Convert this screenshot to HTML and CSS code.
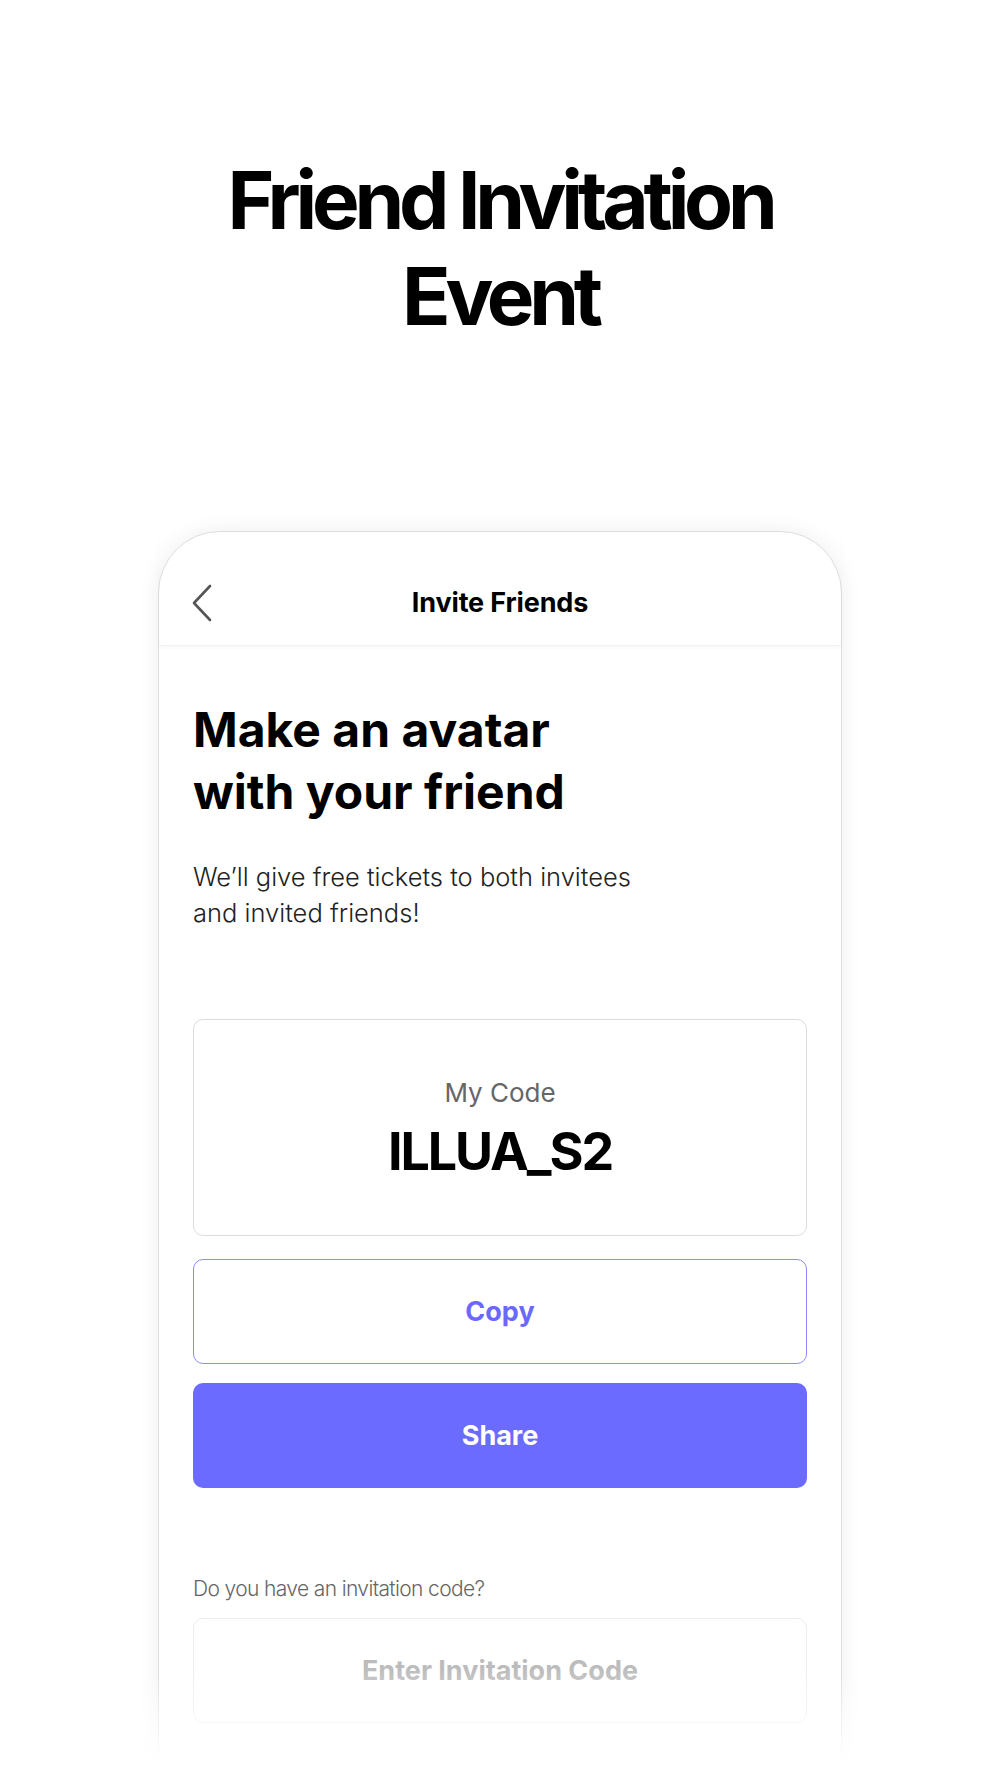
FILE: index.html
```html
<!DOCTYPE html>
<html lang="en">
<head>
    <meta charset="UTF-8">
    <meta name="viewport" content="width=device-width, initial-scale=1">
    <title>Friend Invitation Event</title>
    <link rel="stylesheet" href="styles.css">
</head>
<body>
    <div class="page">
        <h1 class="event-title">Friend Invitation<br>Event</h1>

        <div class="phone">
            <div class="app-header">
                <button class="back-btn" aria-label="Back">
                    <svg width="22" height="38" viewBox="0 0 22 38" fill="none">
                        <polyline points="19,2 3,19 19,36" stroke="#555" stroke-width="2.6" stroke-linecap="round" stroke-linejoin="round"/>
                    </svg>
                </button>
                <span class="header-title">Invite Friends</span>
            </div>

            <div class="content">
                <h2 class="headline">Make an avatar<br>with your friend</h2>
                <p class="desc">We’ll give free tickets to both invitees<br>and invited friends!</p>

                <div class="code-box">
                    <span class="code-label">My Code</span>
                    <span class="code-value">ILLUA_S2</span>
                </div>

                <button class="btn btn-outline">Copy</button>
                <button class="btn btn-fill">Share</button>

                <p class="invite-label">Do you have an invitation code?</p>
                <div class="code-input">Enter Invitation Code</div>
            </div>
        </div>

        <div class="fade"></div>
    </div>
</body>
</html>
```

FILE: styles.css
```css
body {
    margin: 0;
    padding: 0;
    background: #fff;
    font-family: "Inter", "Noto Sans", sans-serif;
    color: #000;
}

.page {
    position: relative;
    height: 1778px;
    overflow: hidden;
    display: flex;
    flex-direction: column;
    align-items: center;
}

.event-title {
    margin: 152px 0 0;
    font-size: 80px;
    line-height: 96px;
    font-weight: 700;
    letter-spacing: -0.065em;
    text-align: center;
}

.phone {
    margin-top: 187px;
    width: 684px;
    height: 1400px;
    box-sizing: border-box;
    border: 1px solid #dedede;
    border-radius: 62px 62px 0 0;
    background: #fff;
    box-shadow: 0 0 22px rgba(0, 0, 0, 0.07);
    display: flex;
    flex-direction: column;
}

.app-header {
    position: relative;
    height: 114px;
    padding-top: 28px;
    box-sizing: border-box;
    display: flex;
    align-items: center;
    justify-content: center;
    border-bottom: 1px solid #f2f2f2;
    box-shadow: 0 2px 4px rgba(0, 0, 0, 0.03);
}

.back-btn {
    position: absolute;
    left: 32px;
    top: 52px;
    padding: 0;
    border: none;
    background: none;
}

.header-title {
    font-size: 27px;
    font-weight: 700;
    letter-spacing: -0.005em;
}

.content {
    padding: 53px 34px 0;
    display: flex;
    flex-direction: column;
}

.headline {
    margin: 0;
    font-size: 48px;
    line-height: 62px;
    font-weight: 700;
    letter-spacing: 0;
}

.desc {
    margin: 36px 0 0;
    font-size: 25.5px;
    line-height: 36px;
    font-weight: 300;
    color: #222;
    letter-spacing: 0;
}

.code-box {
    margin-top: 88px;
    height: 217px;
    box-sizing: border-box;
    border: 1.5px solid #dcdcdc;
    border-radius: 10px;
    display: flex;
    flex-direction: column;
    align-items: center;
    justify-content: center;
    gap: 12px;
}

.code-label {
    font-size: 26px;
    font-weight: 400;
    color: #666;
    letter-spacing: 0;
    margin-top: 4px;
}

.code-value {
    font-size: 52px;
    font-weight: 700;
    letter-spacing: -0.04em;
}

.btn {
    height: 105px;
    border-radius: 10px;
    font-family: inherit;
    font-size: 27px;
    font-weight: 700;
    letter-spacing: 0;
    cursor: pointer;
}

.btn-outline {
    margin-top: 23px;
    background: #fff;
    border: 1.5px solid #8e8bff;
    color: #6b68ff;
}

.btn-fill {
    margin-top: 19px;
    background: #6c6bff;
    border: none;
    color: #fff;
}

.invite-label {
    margin: 88px 0 0;
    font-size: 21px;
    font-weight: 300;
    color: #666;
    letter-spacing: -0.03em;
}

.code-input {
    margin-top: 17px;
    height: 105px;
    box-sizing: border-box;
    border: 1.5px solid #ececec;
    border-radius: 10px;
    display: flex;
    align-items: center;
    justify-content: center;
    font-size: 27px;
    font-weight: 700;
    color: #bcbcbc;
    letter-spacing: 0;
}

.fade {
    position: absolute;
    left: 0;
    right: 0;
    bottom: 0;
    height: 110px;
    background: linear-gradient(to bottom, rgba(255, 255, 255, 0), #fff 85%);
}
```
